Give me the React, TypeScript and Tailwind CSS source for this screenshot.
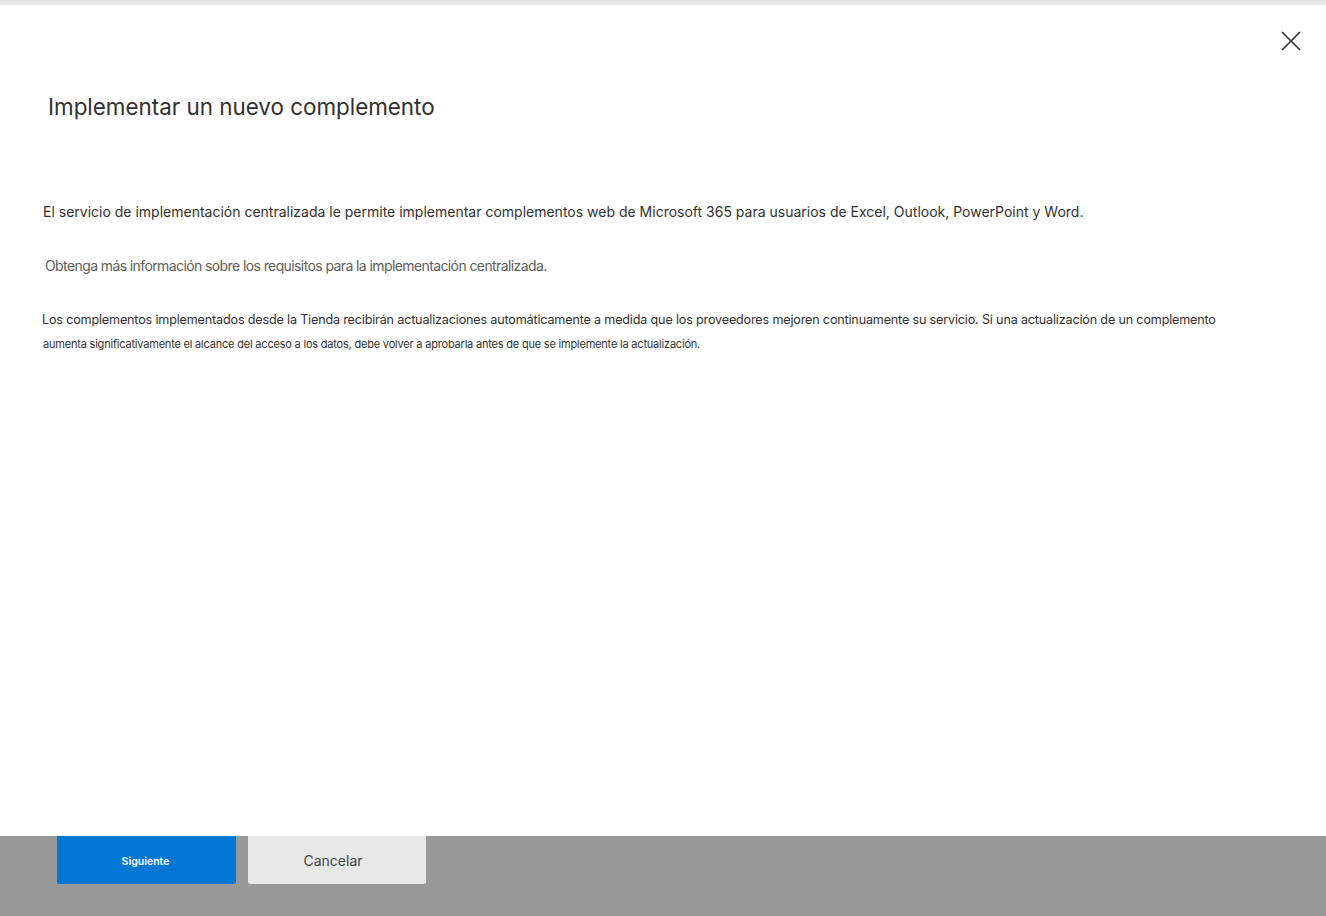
import React from 'react';

const App: React.FC = () => {
  return (
    <div className="w-[1326px] h-[916px] flex flex-col bg-white text-[#323130]" style={{ fontFamily: 'Inter, "Noto Sans", sans-serif' }}>
      <div className="h-[5px] shrink-0 bg-[#e9e9e9] border-t border-[#e2e2e2]" />

      <div className="flex-1 flex flex-col relative">
        <button className="absolute right-[25px] top-[26px] w-[20px] h-[20px] flex items-center justify-center text-[#323130]" aria-label="Cerrar">
          <svg width="20" height="20" viewBox="0 0 20 20" fill="none" stroke="currentColor" strokeWidth="1.6">
            <path d="M1 1 L19 19 M19 1 L1 19" />
          </svg>
        </button>

        <h1 className="ml-[48px] mt-[84px] text-[22.4px] leading-[36px] font-normal">
          Implementar un nuevo complemento
        </h1>

        <p className="ml-[43px] mt-[76px] text-[14px] leading-[22px] text-[#323130]">
          El servicio de implementación centralizada le permite implementar complementos web de Microsoft 365 para usuarios de Excel, Outlook, PowerPoint y Word.
        </p>

        <p className="ml-[45px] mt-[33px] text-[14px] leading-[20px] text-[#605e5c] tracking-[-0.6px]">
          Obtenga más información sobre los requisitos para la implementación centralizada.
        </p>

        <div className="ml-[42px] mt-[34px] text-[#323130]">
          <p className="text-[12.6px] leading-[20px] tracking-[-0.17px]">
            Los complementos implementados desde la Tienda recibirán actualizaciones automáticamente a medida que los proveedores mejoren continuamente su servicio. Si una actualización de un complemento
          </p>
          <p className="ml-[1px] mt-[6px] text-[11px] leading-[16px] tracking-[-0.2px]">
            aumenta significativamente el alcance del acceso a los datos, debe volver a aprobarla antes de que se implemente la actualización.
          </p>
        </div>
      </div>

      <div className="h-[80px] shrink-0 bg-[#999999] flex items-start gap-[12px] pl-[57px]">
        <button className="w-[179px] h-[48px] pt-[4px] pr-[2px] bg-[#0078d4] text-white text-[10.5px] font-semibold rounded-b-[2px]">
          Siguiente
        </button>
        <button className="w-[178px] h-[48px] pr-[8px] bg-[#e8e8e8] text-[#444444] text-[14px] rounded-b-[2px]">
          Cancelar
        </button>
      </div>
    </div>
  );
};

export default App;
